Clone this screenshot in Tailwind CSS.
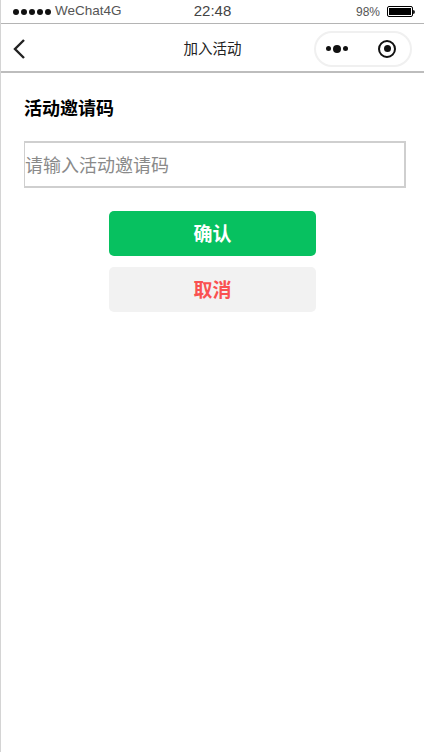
<!DOCTYPE html>
<html lang="zh-CN">
<head>
    <meta charset="UTF-8">
    <meta name="viewport" content="width=device-width, initial-scale=1.0">
    <title>加入活动</title>
    <script src="https://cdn.jsdelivr.net/npm/@tailwindcss/browser@4"></script>
</head>
<body class="bg-white font-['Liberation_Sans','Noto_Sans_CJK_SC',sans-serif]">
    <div class="h-[752px] w-[424px] flex flex-col border-l border-[#d4d4d4] overflow-hidden">

        <!-- status bar -->
        <div class="h-6 shrink-0 flex items-center justify-between pl-3 pr-[9px] border-b border-[#b4b4b4] text-[#444]">
            <div class="w-[140px] flex items-center gap-1 text-[13.5px]">
                <div class="flex gap-[2px]">
                    <span class="size-[6px] rounded-full bg-[#111]"></span>
                    <span class="size-[6px] rounded-full bg-[#111]"></span>
                    <span class="size-[6px] rounded-full bg-[#111]"></span>
                    <span class="size-[6px] rounded-full bg-[#111]"></span>
                    <span class="size-[6px] rounded-full bg-[#111]"></span>
                </div>
                <span class="text-[#555]">WeChat4G</span>
            </div>
            <span class="text-[15px] mr-[3px]">22:48</span>
            <div class="w-[140px] flex items-center justify-end gap-[7px] text-xs">
                <span class="text-[#555]">98%</span>
                <div class="flex items-center">
                    <div class="w-[26px] h-[11px] border border-black rounded-[2px] p-px">
                        <div class="h-full w-[22px] bg-black"></div>
                    </div>
                    <div class="w-[2px] h-1 bg-[#222] rounded-r-sm"></div>
                </div>
            </div>
        </div>

        <!-- nav bar -->
        <div class="h-[49px] shrink-0 relative flex items-center justify-between pt-[2px] pl-3 pr-3 border-b-2 border-[#bdbdbd]">
            <svg class="w-3 h-5" viewBox="0 0 12 20" fill="none" stroke="#222" stroke-width="2.4">
                <path d="M11 1 L2 10 L11 19" />
            </svg>
            <span class="absolute left-0 right-0 mt-[2px] text-center text-[14.5px] text-[#222]">加入活动</span>
            <div class="w-[98px] h-9 rounded-full border-2 border-[#f0f0f0] flex items-center justify-between pl-[10px] pr-[14px]">
                <div class="flex items-center gap-[2px]">
                    <span class="size-[5px] rounded-full bg-[#111]"></span>
                    <span class="size-[8px] rounded-full bg-[#111]"></span>
                    <span class="size-[5px] rounded-full bg-[#111]"></span>
                </div>
                <div class="size-[18px] rounded-full border-[2.5px] border-[#111] flex items-center justify-center">
                    <span class="size-[7px] rounded-full bg-[#111]"></span>
                </div>
            </div>
        </div>

        <!-- form -->
        <div class="pt-6 px-[23px]">
            <h1 class="text-lg font-bold leading-6 text-black">活动邀请码</h1>
            <input type="text" placeholder="请输入活动邀请码"
                class="mt-5 block w-[382px] h-[47px] border-2 border-l border-[#cfcfcf] pt-[3px] text-lg text-[#333] placeholder:text-[#8a8a8a] outline-none">
            <div class="mt-[23px] flex flex-col gap-[11px] pl-[85px]">
                <button class="w-[207px] h-[45px] pt-1 rounded-[5px] bg-[#07c160] text-white text-[19px] font-bold">确认</button>
                <button class="w-[207px] h-[45px] pt-1 rounded-[5px] bg-[#f2f2f2] text-[#fa5151] text-[19px] font-bold">取消</button>
            </div>
        </div>
    </div>
</body>
</html>
